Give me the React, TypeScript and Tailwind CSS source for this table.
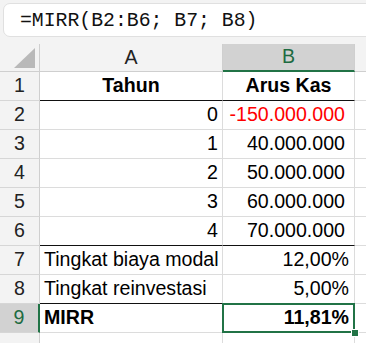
import React from 'react';

type Row = {
  n: number;
  a: string;
  b: string;
  aAlign?: 'left' | 'right' | 'center';
  bold?: boolean;
  red?: boolean;
  bPad?: string;
  thick?: boolean;
};

const rows: Row[] = [
  { n: 1, a: 'Tahun', b: 'Arus Kas', aAlign: 'center', bold: true, thick: true },
  { n: 2, a: '0', b: '-150.000.000', aAlign: 'right', red: true, bPad: 'pr-[9px]' },
  { n: 3, a: '1', b: '40.000.000', aAlign: 'right', bPad: 'pr-[9px]' },
  { n: 4, a: '2', b: '50.000.000', aAlign: 'right', bPad: 'pr-[9px]' },
  { n: 5, a: '3', b: '60.000.000', aAlign: 'right', bPad: 'pr-[9px]' },
  { n: 6, a: '4', b: '70.000.000', aAlign: 'right', bPad: 'pr-[9px]', thick: true },
  { n: 7, a: 'Tingkat biaya modal', b: '12,00%', aAlign: 'left', bPad: 'pr-[5px]' },
  { n: 8, a: 'Tingkat reinvestasi', b: '5,00%', aAlign: 'left', bPad: 'pr-[5px]', thick: true },
  { n: 9, a: 'MIRR', b: '11,81%', aAlign: 'left', bold: true, bPad: 'pr-[5px]' },
];

export default function App() {
  return (
    <div className="w-[366px] h-[343px] overflow-hidden bg-[#f3f3f3] text-black font-['Liberation_Sans',Arial,sans-serif]">
      {/* formula bar */}
      <div className="h-[44px] pt-[3px] pl-[3px]">
        <div className="w-[380px] h-[34px] bg-white border border-[#e0e0e0] rounded-[7px] flex items-center pl-[16px] pt-[3px]">
          <span className="font-['Liberation_Mono','DejaVu_Sans_Mono',monospace] text-[19.8px] text-[#111] leading-none">
            =MIRR(B2:B6; B7; B8)
          </span>
        </div>
      </div>

      {/* sheet */}
      <div className="grid grid-cols-[40px_183px_132px_11px] auto-rows-[29px] grid-rows-[28px] text-[19.6px] leading-none">
        {/* column headers */}
        <div className="h-[28px] border-r border-b border-[#cfcfcf] bg-[#f3f3f3] flex items-end justify-end pr-[4px] pb-[3px]">
          <svg width="21" height="20" viewBox="0 0 21 20">
            <polygon points="21,0 21,20 0,20" fill="#b9b9b9" />
          </svg>
        </div>
        <div className="h-[28px] border-r border-b border-[#cfcfcf] bg-[#f3f3f3] flex items-center justify-center text-[#222]">
          A
        </div>
        <div className="h-[28px] border-r border-[#cfcfcf] border-b-2 border-b-[#217346] bg-[#d2d2d2] flex items-center justify-center text-[#1e6b41]">
          B
        </div>
        <div className="h-[28px] border-b border-[#cfcfcf] bg-[#f3f3f3]" />

        {rows.map((r) => {
          const sel = r.n === 9;
          const bottom = r.thick ? 'border-b-[#111]' : 'border-b-[#dcdcdc]';
          return (
            <React.Fragment key={r.n}>
              <div
                className={
                  'h-[29px] border-b border-b-[#d6d6d6] flex items-center justify-center ' +
                  (sel
                    ? 'bg-[#d2d2d2] text-[#1e6b41] border-r-2 border-r-[#217346]'
                    : 'bg-[#f3f3f3] text-[#222] border-r border-r-[#cfcfcf]')
                }
              >
                {r.n}
              </div>
              <div
                className={
                  'h-[29px] bg-white border-r border-r-[#dcdcdc] border-b flex items-center px-[4px] whitespace-nowrap ' +
                  bottom +
                  (r.aAlign === 'center' ? ' justify-center' : r.aAlign === 'right' ? ' justify-end' : ' justify-start') +
                  (r.bold ? ' font-bold' : '')
                }
              >
                {r.a}
              </div>
              <div
                className={
                  'relative h-[29px] bg-white border-r border-r-[#dcdcdc] border-b flex items-center whitespace-nowrap ' +
                  bottom +
                  (r.n === 1 ? ' justify-center' : ' justify-end ' + (r.bPad ?? '')) +
                  (r.bold ? ' font-bold' : '') +
                  (r.red ? ' text-[#ff0000]' : '')
                }
              >
                {r.b}
                {sel && (
                  <>
                    <div className="absolute -left-px -top-px -right-px -bottom-px border-2 border-[#217346]" />
                    <div className="absolute -right-[4px] -bottom-[4px] w-[6px] h-[6px] bg-[#217346] outline outline-1 outline-white" />
                  </>
                )}
              </div>
              <div className="h-[29px] bg-white border-b border-b-[#dcdcdc]" />
            </React.Fragment>
          );
        })}

        {/* row 10 partial */}
        <div className="h-[29px] bg-[#f3f3f3] border-r border-r-[#cfcfcf]" />
        <div className="h-[29px] bg-white border-r border-r-[#dcdcdc]" />
        <div className="h-[29px] bg-white border-r border-r-[#dcdcdc]" />
        <div className="h-[29px] bg-white" />
      </div>
    </div>
  );
}
